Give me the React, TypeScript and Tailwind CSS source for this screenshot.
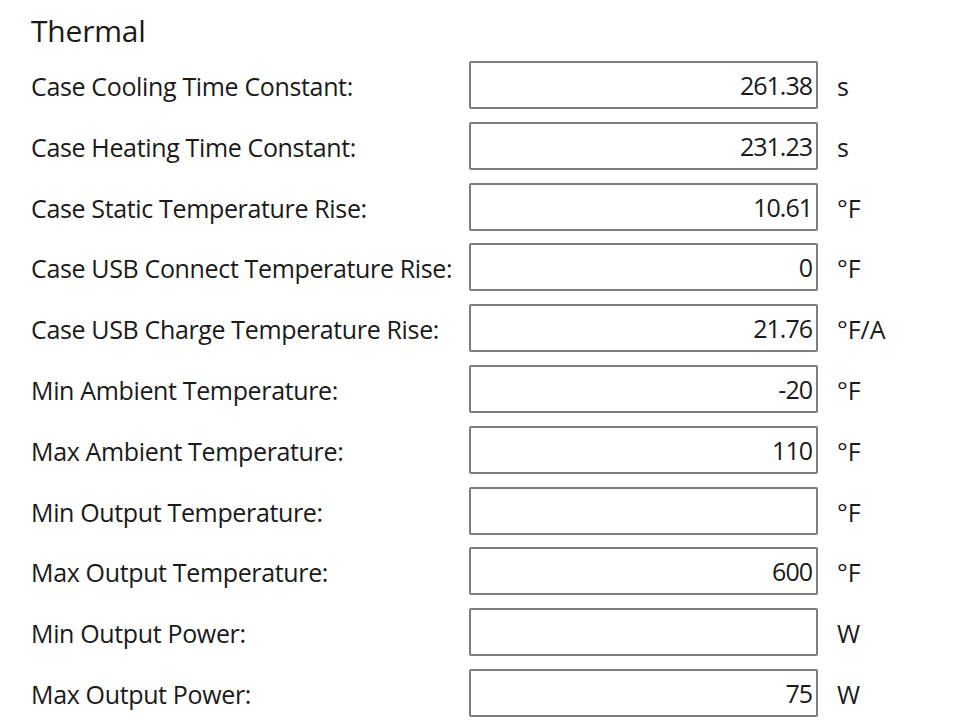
import React from "react";

const rows: [string, string, string][] = [
  ["Case Cooling Time Constant:", "261.38", "s"],
  ["Case Heating Time Constant:", "231.23", "s"],
  ["Case Static Temperature Rise:", "10.61", "°F"],
  ["Case USB Connect Temperature Rise:", "0", "°F"],
  ["Case USB Charge Temperature Rise:", "21.76", "°F/A"],
  ["Min Ambient Temperature:", "-20", "°F"],
  ["Max Ambient Temperature:", "110", "°F"],
  ["Min Output Temperature:", "", "°F"],
  ["Max Output Temperature:", "600", "°F"],
  ["Min Output Power:", "", "W"],
  ["Max Output Power:", "75", "W"],
];

export default function App() {
  return (
    <div
      className="w-[960px] h-[720px] bg-white overflow-hidden pl-[31px] pt-[11px] text-[#1a1a1a]"
      style={{ fontFamily: '"Open Sans", "Noto Sans", sans-serif' }}
    >
      <div className="text-[30px] leading-[40px] h-[50px] tracking-[-0.2px]">Thermal</div>
      <div className="flex flex-col gap-[12.8px]">
        {rows.map(([label, value, unit]) => (
          <div key={label} className="flex items-center h-[48px]">
            <div className="w-[438px] shrink-0 text-[25px] leading-[34px] tracking-[-0.35px] pt-[2px] whitespace-nowrap">{label}</div>
            <div className="w-[349px] h-[48px] shrink-0 border-2 border-[#7d7d7d] rounded-[2px] flex items-center justify-end pr-[4px] text-[25px] leading-[34px] tracking-[-1px]">
              {value}
            </div>
            <div className="pl-[19px] text-[25px] leading-[34px] pt-[2px]">{unit}</div>
          </div>
        ))}
      </div>
    </div>
  );
}
